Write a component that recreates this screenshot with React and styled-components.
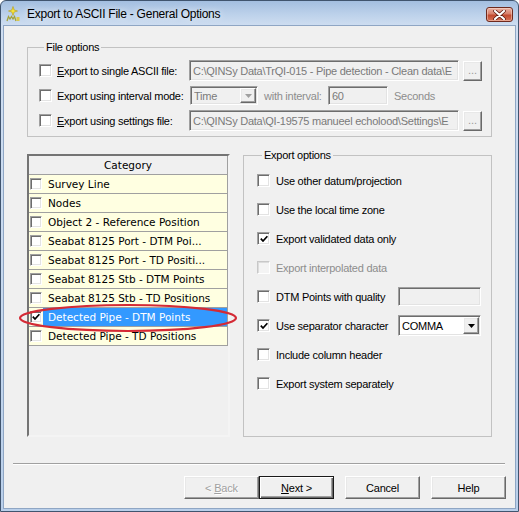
import React from "react";
import styled, { createGlobalStyle, css } from "styled-components";

const Global = createGlobalStyle`
  html, body { margin: 0; padding: 0; background: #fff; }
  body { font-family: "Liberation Sans", Arial, sans-serif; }
  * { box-sizing: border-box; }
`;

const Window = styled.div`
  position: relative;
  width: 519px;
  height: 512px;
  display: flex;
  flex-direction: column;
  border: 1px solid #40546e;
  border-radius: 6px 6px 0 0;
  background: linear-gradient(180deg, #a3bee0 0px, #bcd1ea 13px, #cfdef1 25px, #c6d8ee 60%, #b9cfea 100%);
  overflow: hidden;
`;

const TitleBar = styled.div`
  height: 25px;
  flex: none;
  display: flex;
  align-items: center;
  padding: 0 5px 0 4px;
`;

const Title = styled.span`
  margin-left: 6px;
  font-family: "Liberation Sans", Arial, sans-serif;
  font-size: 12px;
  letter-spacing: -0.25px;
  color: #000;
  text-shadow: 0 0 6px rgba(255, 255, 255, 0.9);
`;

const CloseButton = styled.div`
  margin-left: auto;
  margin-top: 2px;
  width: 27px;
  height: 15px;
  border-radius: 3px;
  border: 1px solid #6e2a1e;
  background: linear-gradient(180deg, #eab2a4 0%, #d8806b 45%, #c24a30 55%, #d67256 100%);
  box-shadow: inset 0 0 0 1px rgba(255, 230, 220, 0.45);
  display: flex;
  align-items: center;
  justify-content: center;
`;

const Body = styled.div`
  flex: 1;
  margin: 0 3px 3px 3px;
  background: #f0f0f0;
  box-shadow: 0 0 0 1px #8fa6c4;
  display: flex;
  flex-direction: column;
`;

const Group = styled.fieldset`
  margin: 0;
  min-width: 0;
  border: 1px solid #c2c2c2;
  padding: ${(p) => p.$pad};
  display: flex;
  flex-direction: column;
`;

const Legend = styled.legend`
  font-size: 11px;
  letter-spacing: -0.25px;
  line-height: 13px;
  padding: 0 2px;
  margin-left: 5px;
  color: #000;
`;

const FileGroup = styled(Group)`
  margin: 15px 23px 0 23px;
`;

const Row = styled.div`
  display: flex;
  align-items: center;
  height: ${(p) => p.$h}px;
  flex: none;
`;

const Label = styled.span`
  font-size: 11px;
  letter-spacing: -0.25px;
  white-space: nowrap;
  color: ${(p) => (p.$disabled ? "#8d8d8d" : "#000")};
  margin-left: ${(p) => p.$ml || 0}px;
  ${(p) =>
    p.$w &&
    css`
      width: ${p.$w}px;
      flex: none;
    `}
`;

const U = styled.span`
  text-decoration: underline;
`;

const Box = styled.span`
  flex: none;
  width: ${(p) => p.$size}px;
  height: ${(p) => p.$size}px;
  margin-right: ${(p) => p.$mr}px;
  background: ${(p) => (p.$disabled ? "#f4f4f4" : "#fff")};
  border: 1px solid;
  border-color: ${(p) => (p.$disabled ? "#c8c8c8 #fff #fff #c8c8c8" : "#a0a0a0 #fff #fff #a0a0a0")};
  box-shadow: ${(p) =>
    p.$disabled ? "inset 1px 1px 0 #dcdcdc" : "inset 1px 1px 0 #6d6d6d, inset -1px -1px 0 #e3e3e3"};
  display: flex;
  align-items: center;
  justify-content: center;
`;

const Check = ({ checked, disabled, size = 13, mr = 6 }) => (
  <Box $size={size} $mr={mr} $disabled={disabled}>
    {checked && (
      <svg width="8" height="8" viewBox="0 0 8 8">
        <path d="M0.8 3.6 L3 6 L7.4 1.2" fill="none" stroke="#000" strokeWidth="1.7" />
      </svg>
    )}
  </Box>
);

const Field = styled.div`
  flex: none;
  width: ${(p) => p.$w}px;
  height: ${(p) => p.$h}px;
  margin-left: ${(p) => p.$ml || 0}px;
  border: 1px solid;
  border-color: #a0a0a0 #fff #fff #a0a0a0;
  box-shadow: inset 1px 1px 0 #6d6d6d, inset -1px -1px 0 #e3e3e3;
  background: ${(p) => (p.$white ? "#fff" : "#f0f0f0")};
  color: ${(p) => (p.$white ? "#000" : "#7a7a7a")};
  font-size: 11px;
  letter-spacing: -0.25px;
  padding: 0 0 0 3px;
  display: flex;
  align-items: center;
  overflow: hidden;
  white-space: nowrap;
`;

const FieldText = styled.span`
  flex: 1;
  overflow: hidden;
`;

const raised = css`
  border: 1px solid;
  border-color: #fff #696969 #696969 #fff;
  box-shadow: inset -1px -1px 0 #a0a0a0, inset 1px 1px 0 #e8e8e8;
  background: #f0f0f0;
`;

const Browse = styled.div`
  ${raised};
  flex: none;
  margin-left: 4px;
  width: 19px;
  height: 20px;
  font-size: 11px;
  color: #9a9a9a;
  display: flex;
  align-items: flex-end;
  justify-content: center;
  padding-bottom: 4px;
  line-height: 1;
`;

const DropBtn = styled.span`
  ${raised};
  flex: none;
  width: 16px;
  align-self: stretch;
  margin: 1px 1px 1px 0;
  display: flex;
  align-items: center;
  justify-content: center;
`;

const Arrow = ({ color }) => (
  <svg width="7" height="4" viewBox="0 0 7 4">
    <path d="M0 0 H7 L3.5 4 Z" fill={color} />
  </svg>
);

const Lower = styled.div`
  position: relative;
  display: flex;
  gap: 13px;
  margin: 12px 23px 0 23px;
  height: 288px;
  flex: none;
`;

const Grid = styled.div`
  width: 203px;
  flex: none;
  margin-top: 5px;
  border: 2px solid;
  border-color: #747474 #f4f4f4 #f4f4f4 #747474;
  display: flex;
  flex-direction: column;
  font-family: "DejaVu Sans", Tahoma, sans-serif;
  font-size: 10.5px;
`;

const GridHeader = styled.div`
  height: 19px;
  flex: none;
  border-right: 1px solid #a0a0a0;
  border-bottom: 1px solid #a0a0a0;
  display: flex;
  align-items: center;
  justify-content: center;
  color: #000;
`;

const GridRow = styled.div`
  height: 19px;
  flex: none;
  display: flex;
  border-right: 1px solid #a0a0a0;
  border-bottom: 1px solid #a0a0a0;
  background: #ffffe1;
`;

const CheckCell = styled.div`
  width: 14px;
  flex: none;
  display: flex;
  align-items: center;
  padding-left: 1px;
`;

const TextCell = styled.div`
  flex: 1;
  display: flex;
  align-items: center;
  padding-left: 5px;
  white-space: nowrap;
  overflow: hidden;
  background: ${(p) => (p.$selected ? "#3399ff" : "transparent")};
  color: ${(p) => (p.$selected ? "#fff" : "#000")};
`;

const ExportGroup = styled(Group)`
  flex: 1;
`;

const Ellipse = styled.svg`
  position: absolute;
  left: -10px;
  top: 153px;
  pointer-events: none;
`;

const Separator = styled.div`
  margin: 26px 10px 0 9px;
  height: 2px;
  border-top: 1px solid #a0a0a0;
  border-bottom: 1px solid #fff;
  flex: none;
`;

const ButtonRow = styled.div`
  display: flex;
  justify-content: flex-end;
  margin: 11px 9px 0 0;
  flex: none;
`;

const Button = styled.div`
  ${raised};
  width: 75px;
  height: 23px;
  margin-left: ${(p) => p.$ml}px;
  display: flex;
  align-items: center;
  justify-content: center;
  white-space: pre;
  font-size: 11px;
  letter-spacing: -0.2px;
  color: ${(p) => (p.$disabled ? "#a0a0a0" : "#000")};
  ${(p) =>
    p.$disabled &&
    css`
      text-shadow: 1px 1px 0 #fff;
    `}
  ${(p) =>
    p.$default &&
    css`
      border: 1px solid #1a1a1a;
      box-shadow: inset 1px 1px 0 #fff, inset -1px -1px 0 #696969, inset -2px -2px 0 #a0a0a0;
    `}
`;

const AppIcon = () => (
  <svg width="16" height="16" viewBox="0 0 16 16">
    <path d="M8 0.5 L9.2 4 L12.5 5 L9.2 6 L8 9.5 L6.8 6 L3.5 5 L6.8 4 Z" fill="#f4e13a" stroke="#b59a10" strokeWidth="0.6" />
    <path d="M2 15 L3.5 10.5 L5 13 L6.5 10.5 L8 13 L9.5 10.5 L11 15" fill="none" stroke="#a2a23a" strokeWidth="1.3" />
    <rect x="11.5" y="11" width="3" height="4" fill="#d9c84a" />
  </svg>
);

const categories = [
  "Survey Line",
  "Nodes",
  "Object 2 - Reference Position",
  "Seabat 8125 Port - DTM Poi...",
  "Seabat 8125 Port - TD Positi...",
  "Seabat 8125 Stb - DTM Points",
  "Seabat 8125 Stb - TD Positions",
  "Detected Pipe - DTM Points",
  "Detected Pipe - TD Positions",
];

export default function App() {
  return (
    <>
      <Global />
      <Window>
        <TitleBar>
          <AppIcon />
          <Title>Export to ASCII File - General Options</Title>
          <CloseButton>
            <svg width="13" height="10" viewBox="0 0 13 10">
              <path d="M2 1 L11 9 M11 1 L2 9" stroke="#5a1a10" strokeWidth="3.6" strokeLinecap="round" />
              <path d="M2 1 L11 9 M11 1 L2 9" stroke="#fff" strokeWidth="2.2" strokeLinecap="round" />
            </svg>
          </CloseButton>
        </TitleBar>
        <Body>
          <FileGroup $pad="4px 9px 3px 11px">
            <Legend>File options</Legend>
            <Row $h={25}>
              <Check mr={5} />
              <Label $w={132}>
                <U>E</U>xport to single ASCII file:
              </Label>
              <Field $w={270} $h={21}>
                <FieldText>C:\QINSy Data\TrQI-015 - Pipe detection - Clean data\E</FieldText>
              </Field>
              <Browse>...</Browse>
            </Row>
            <Row $h={25}>
              <Check mr={5} />
              <Label $w={133}>Export using interval mode:</Label>
              <Field $w={68} $h={19}>
                <FieldText>Time</FieldText>
                <DropBtn>
                  <Arrow color="#a0a0a0" />
                </DropBtn>
              </Field>
              <Label $w={64} $ml={6} $disabled>
                with interval:
              </Label>
              <Field $w={60} $h={19}>
                <FieldText>60</FieldText>
              </Field>
              <Label $ml={6} $disabled>
                Seconds
              </Label>
            </Row>
            <Row $h={25}>
              <Check mr={5} />
              <Label $w={132}>
                <U>E</U>xport using settings file:
              </Label>
              <Field $w={270} $h={21}>
                <FieldText>C:\QINSy Data\QI-19575 manueel echolood\Settings\E</FieldText>
              </Field>
              <Browse>...</Browse>
            </Row>
          </FileGroup>

          <Lower>
            <Grid>
              <GridHeader>Category</GridHeader>
              {categories.map((c, i) => (
                <GridRow key={c}>
                  <CheckCell>
                    <Check size={12} mr={0} checked={i === 7} />
                  </CheckCell>
                  <TextCell $selected={i === 7}>{c}</TextCell>
                </GridRow>
              ))}
            </Grid>
            <ExportGroup $pad="4px 10px 0 13px">
              <Legend>Export options</Legend>
              <Row $h={29}>
                <Check />
                <Label>Use other datum/projection</Label>
              </Row>
              <Row $h={29}>
                <Check />
                <Label>Use the local time zone</Label>
              </Row>
              <Row $h={29}>
                <Check checked />
                <Label>Export validated data only</Label>
              </Row>
              <Row $h={29}>
                <Check disabled />
                <Label $disabled>Export interpolated data</Label>
              </Row>
              <Row $h={29}>
                <Check />
                <Label $w={122}>DTM Points with quality</Label>
                <Field $w={83} $h={19} />
              </Row>
              <Row $h={29}>
                <Check checked />
                <Label $w={122}>Use separator character</Label>
                <Field $w={83} $h={21} $white>
                  <FieldText>COMMA</FieldText>
                  <DropBtn>
                    <Arrow color="#000" />
                  </DropBtn>
                </Field>
              </Row>
              <Row $h={29}>
                <Check />
                <Label>Include column header</Label>
              </Row>
              <Row $h={29}>
                <Check />
                <Label>Export system separately</Label>
              </Row>
            </ExportGroup>
            <Ellipse width="222" height="32" viewBox="0 0 222 32">
              <ellipse cx="111" cy="16" rx="108" ry="13" fill="none" stroke="#d42a35" strokeWidth="2.2" />
            </Ellipse>
          </Lower>

          <Separator />
          <ButtonRow>
            <Button $ml={0} $disabled>
              {"< "}
              <U>B</U>ack
            </Button>
            <Button $ml={0} $default>
              <U>N</U>
              {"ext >"}
            </Button>
            <Button $ml={11}>Cancel</Button>
            <Button $ml={11}>Help</Button>
          </ButtonRow>
        </Body>
      </Window>
    </>
  );
}
